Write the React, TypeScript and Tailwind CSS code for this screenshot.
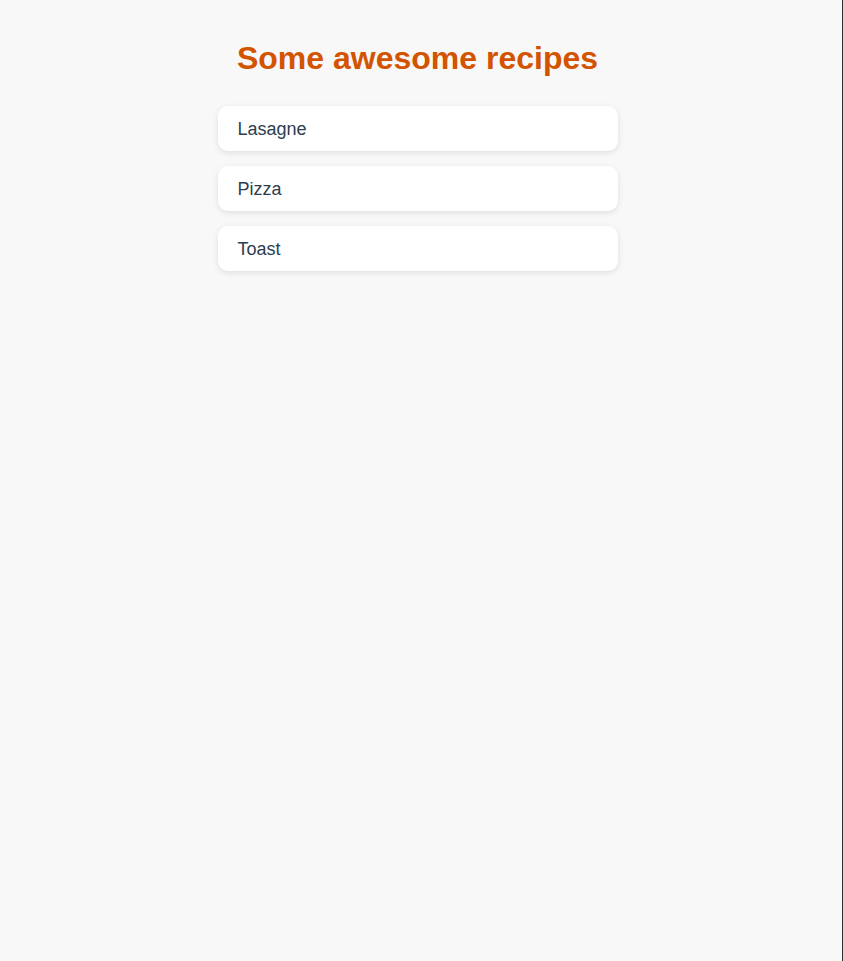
const recipes = ['Lasagne', 'Pizza', 'Toast'];

export default function App() {
  return (
    <div className="min-h-screen w-full flex bg-[#f8f8f8] font-['Liberation_Sans',Arial,sans-serif]">
      <div className="flex-1 flex flex-col items-center pt-10 pr-[7px]">
        <h1 className="text-[32px] leading-[37px] font-bold text-[#d35400]">Some awesome recipes</h1>
        <ul className="w-[400px] mt-[29px] flex flex-col gap-[15px]">
          {recipes.map((name) => (
            <li
              key={name}
              className="bg-white rounded-[10px] px-5 pt-[13px] pb-[11px] text-[18px] leading-[21px] text-[#2c3e50] shadow-[0_2px_6px_rgba(0,0,0,0.1)]"
            >
              {name}
            </li>
          ))}
        </ul>
      </div>
      <div className="w-px bg-[#333]" />
    </div>
  );
}
